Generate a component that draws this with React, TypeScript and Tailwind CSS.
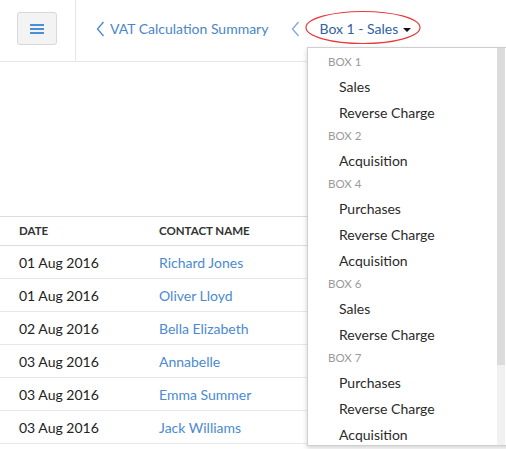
const ROWS = [
    { date: "01 Aug 2016", name: "Richard Jones" },
    { date: "01 Aug 2016", name: "Oliver Lloyd" },
    { date: "02 Aug 2016", name: "Bella Elizabeth" },
    { date: "03 Aug 2016", name: "Annabelle" },
    { date: "03 Aug 2016", name: "Emma Summer" },
    { date: "03 Aug 2016", name: "Jack Williams" },
];

const GROUPS = [
    { label: "BOX 1", items: ["Sales", "Reverse Charge"] },
    { label: "BOX 2", items: ["Acquisition"] },
    { label: "BOX 4", items: ["Purchases", "Reverse Charge", "Acquisition"] },
    { label: "BOX 6", items: ["Sales", "Reverse Charge"] },
    { label: "BOX 7", items: ["Purchases", "Reverse Charge", "Acquisition"] },
];

function Chevron({ className }: { className: string }) {
    return (
        <svg width="9" height="16" viewBox="0 0 9 16" className={className}>
            <polyline points="7.5,1 1.5,8 7.5,15" fill="none" stroke="currentColor" strokeWidth="1.3" />
        </svg>
    );
}

export default function App() {
    return (
        <div className="relative h-[449px] w-[506px] overflow-hidden bg-white font-['Lato','Liberation_Sans',sans-serif] text-[14px] text-[#222]">
            {/* Header */}
            <div className="flex h-[62px] border-b border-[#e6e6e6]">
                <div className="flex w-[76px] shrink-0 border-r border-[#e6e6e6] pl-[17px] pt-[12px]">
                    <button className="flex h-[33px] w-[40px] flex-col items-center justify-center gap-[2px] rounded-[3px] border border-[#d8d8d8] bg-[#f3f3f3]">
                        <span className="h-[2px] w-[14px] bg-[#4a8fd8]" />
                        <span className="h-[2px] w-[14px] bg-[#4a8fd8]" />
                        <span className="h-[2px] w-[14px] bg-[#4a8fd8]" />
                    </button>
                </div>
                <div className="flex items-center pb-[4px]">
                    <Chevron className="ml-[20px] text-[#4a86c9]" />
                    <span className="ml-[5px] text-[#4a86c9]">VAT Calculation Summary</span>
                    <Chevron className="ml-[23px] text-[#7fa9d8]" />
                    <span className="ml-[19px] text-[#2f62a3]">Box 1 - Sales</span>
                    <span className="ml-[5px] mt-[2px] h-0 w-0 border-x-[4px] border-t-[4px] border-x-transparent border-t-[#111]" />
                </div>
            </div>

            {/* Table */}
            <div className="mt-[154px]">
                <div className="flex h-[30px] items-center border-y border-[#dcdcdc] text-[11.5px] font-bold text-[#333]">
                    <div className="w-[159px] pl-[19px]">DATE</div>
                    <div>CONTACT NAME</div>
                </div>
                {ROWS.map((r, i) => (
                    <div key={i} className="flex h-[33px] items-center border-b border-[#e8e8e8]">
                        <div className="w-[159px] pl-[19px]">{r.date}</div>
                        <div className="text-[#4a8ad2]">{r.name}</div>
                    </div>
                ))}
            </div>

            {/* Annotation ellipse */}
            <svg className="pointer-events-none absolute left-[304px] top-[10px]" width="120" height="36" viewBox="0 0 120 36">
                <ellipse cx="59" cy="17.5" rx="57" ry="16" fill="none" stroke="#e63a3a" strokeWidth="1.2" />
            </svg>

            {/* Dropdown */}
            <div className="absolute left-[307px] top-[47px] flex h-[399px] w-[210px] border border-[#cfcfcf] bg-white shadow-[0_2px_5px_rgba(0,0,0,0.18)]">
                <div className="flex-1 pt-[3px]">
                    {GROUPS.map((g) => (
                        <div key={g.label}>
                            <div className="flex h-[22px] items-center pl-[20px] text-[11.5px] text-[#9a9a9a]">{g.label}</div>
                            {g.items.map((it, j) => (
                                <div key={j} className="flex h-[26px] items-center pl-[31px] text-[#2a2a2a]">{it}</div>
                            ))}
                        </div>
                    ))}
                </div>
                <div className="mr-[11px] flex w-[8px] flex-col bg-[#f1f1f1]">
                    <div className="h-[317px] bg-[#dcdcdc]" />
                </div>
            </div>
        </div>
    );
}
